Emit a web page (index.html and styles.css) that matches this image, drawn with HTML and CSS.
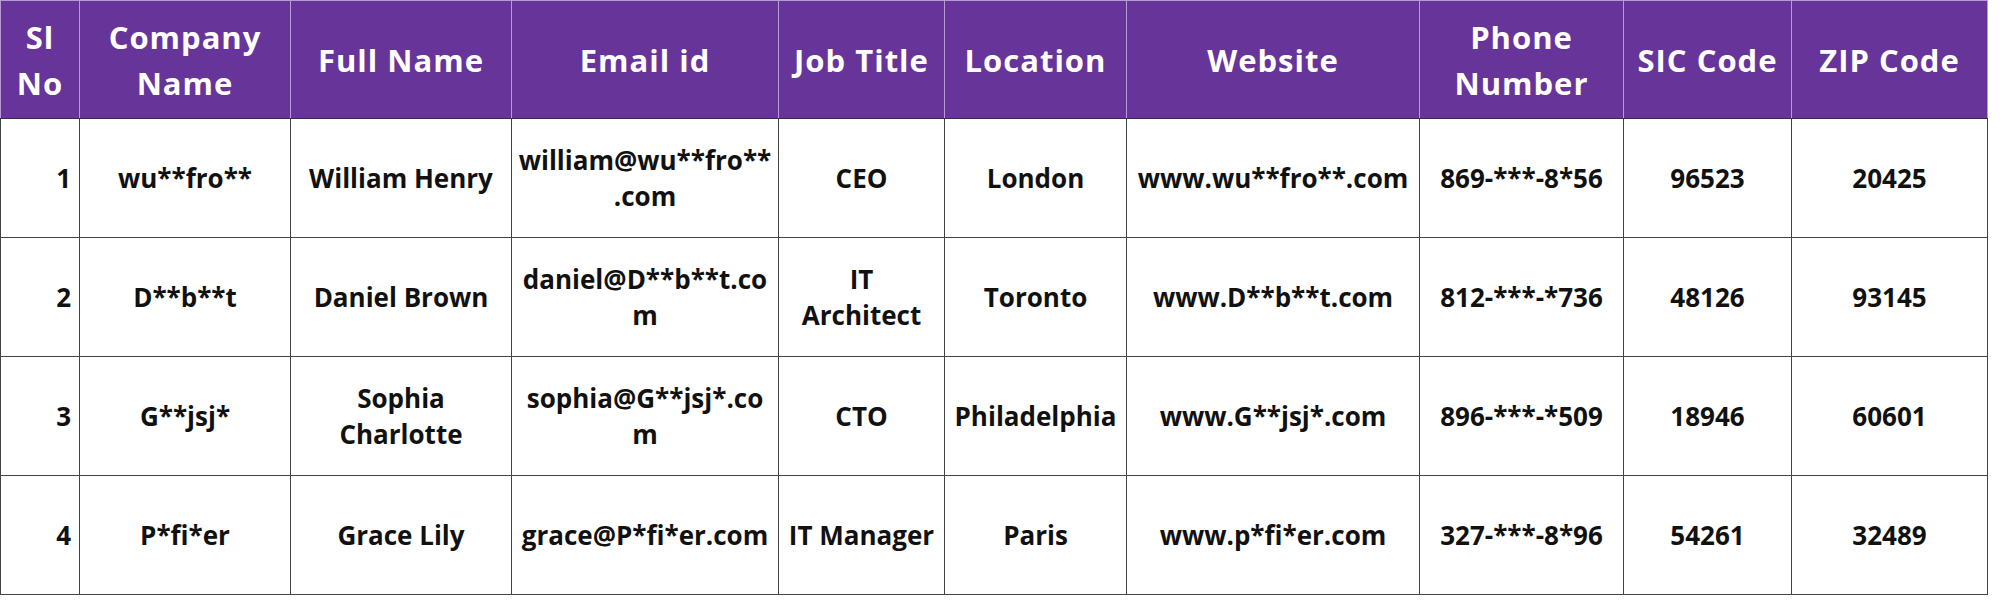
FILE: index.html
```html
<!DOCTYPE html>
<html>
<head>
<meta charset="utf-8">
<link rel="stylesheet" href="styles.css">
</head>
<body>
<table class="grid">
  <colgroup>
    <col class="c1"><col class="c2"><col class="c3"><col class="c4"><col class="c5">
    <col class="c6"><col class="c7"><col class="c8"><col class="c9"><col class="c10">
  </colgroup>
  <thead>
    <tr>
      <th>Sl<br>No</th>
      <th>Company<br>Name</th>
      <th>Full Name</th>
      <th>Email id</th>
      <th>Job Title</th>
      <th>Location</th>
      <th>Website</th>
      <th>Phone<br>Number</th>
      <th>SIC Code</th>
      <th>ZIP Code</th>
    </tr>
  </thead>
  <tbody>
    <tr>
      <td class="num">1</td>
      <td>wu**fro**</td>
      <td>William Henry</td>
      <td>william@wu**fro**<br>.com</td>
      <td>CEO</td>
      <td>London</td>
      <td>www.wu**fro**.com</td>
      <td>869-***-8*56</td>
      <td>96523</td>
      <td>20425</td>
    </tr>
    <tr>
      <td class="num">2</td>
      <td>D**b**t</td>
      <td>Daniel Brown</td>
      <td>daniel@D**b**t.co<br>m</td>
      <td>IT<br>Architect</td>
      <td>Toronto</td>
      <td>www.D**b**t.com</td>
      <td>812-***-*736</td>
      <td>48126</td>
      <td>93145</td>
    </tr>
    <tr>
      <td class="num">3</td>
      <td>G**jsj*</td>
      <td>Sophia<br>Charlotte</td>
      <td>sophia@G**jsj*.co<br>m</td>
      <td>CTO</td>
      <td>Philadelphia</td>
      <td>www.G**jsj*.com</td>
      <td>896-***-*509</td>
      <td>18946</td>
      <td>60601</td>
    </tr>
    <tr>
      <td class="num">4</td>
      <td>P*fi*er</td>
      <td>Grace Lily</td>
      <td>grace@P*fi*er.com</td>
      <td>IT Manager</td>
      <td>Paris</td>
      <td>www.p*fi*er.com</td>
      <td>327-***-8*96</td>
      <td>54261</td>
      <td>32489</td>
    </tr>
  </tbody>
</table>
</body>
</html>
```

FILE: styles.css
```css
html, body {
  margin: 0;
  padding: 0;
  background: #ffffff;
}
body {
  font-family: "Open Sans", "Noto Sans", sans-serif;
  font-weight: 700;
}
.grid {
  border-collapse: collapse;
  table-layout: fixed;
  width: 1988px;
}
.c1 { width: 79px; }
.c2 { width: 211px; }
.c3 { width: 221px; }
.c4 { width: 267px; }
.c5 { width: 166px; }
.c6 { width: 182px; }
.c7 { width: 293px; }
.c8 { width: 204px; }
.c9 { width: 168px; }
.c10 { width: 196px; }
.grid th {
  background: #67359a;
  color: #ffffff;
  font-size: 31px;
  letter-spacing: 1px;
  line-height: 46px;
  font-weight: 700;
  height: 117px;
  padding: 0;
  text-align: center;
  vertical-align: middle;
  border: 1px solid #b89ad6;
  border-bottom: 1px solid #3a2a4a;
  white-space: nowrap;
}
.grid td {
  color: #111111;
  font-size: 26px;
  line-height: 36px;
  height: 118px;
  padding: 0;
  text-align: center;
  vertical-align: middle;
  border: 1px solid #444444;
  white-space: nowrap;
}
.grid td.num {
  text-align: right;
  padding-right: 8px;
}
```
